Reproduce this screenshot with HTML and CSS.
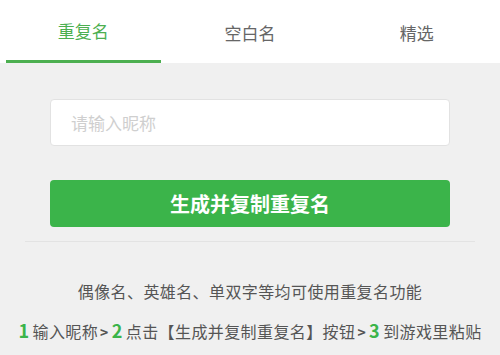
FILE: index.html
```html
<!DOCTYPE html>
<html>
<head>
  <meta charset="utf-8">
  <meta name="viewport" content="width=device-width, initial-scale=1.0">
  <link rel="stylesheet" href="styles.css">
</head>
<body>
  <div class="tabs">
    <div class="tab active">重复名</div>
    <div class="tab">空白名</div>
    <div class="tab">精选</div>
  </div>

  <div class="panel">
    <input class="name-input" type="text" placeholder="请输入昵称">
    <button class="make-button">生成并复制重复名</button>
  </div>

  <div class="divider"></div>

  <div class="tips">
    <p class="tip">偶像名、英雄名、单双字等均可使用重复名功能</p>
    <p class="steps">
      <span class="num">1</span>输入昵称<span class="arrow">&gt;</span><span class="num">2</span>点击【生成并复制重复名】按钮<span class="arrow">&gt;</span><span class="num">3</span>到游戏里粘贴
    </p>
  </div>
</body>
</html>
```

FILE: styles.css
```css
* {
  box-sizing: border-box;
}
body {
  margin: 0;
  background: #f0f0f0;
  font-family: "Noto Sans CJK SC", "Noto Sans", sans-serif;
  color: #555;
}
.tabs {
  display: flex;
  background: #fff;
  height: 63px;
}
.tab {
  flex: 1;
  margin: 0 6px;
  text-align: center;
  font-size: 17px;
  line-height: 65px;
  color: #666;
}
.tab.active {
  color: #4caf50;
  line-height: 62px;
  border-bottom: 3px solid #4caf50;
}
.panel {
  padding: 36px 50px 0;
}
.name-input {
  display: block;
  width: 100%;
  height: 47px;
  padding: 0 20px;
  border: 1px solid #e2e2e2;
  border-radius: 4px;
  background: #fff;
  font-family: inherit;
  font-size: 17px;
  color: #333;
  outline: none;
}
.name-input::placeholder {
  color: #cfcfcf;
}
.make-button {
  display: block;
  width: 100%;
  height: 47px;
  margin-top: 34px;
  border: none;
  border-radius: 4px;
  background: #3bb44a;
  color: #fff;
  font-family: inherit;
  font-size: 20px;
  font-weight: bold;
  cursor: pointer;
}
.divider {
  height: 1px;
  margin: 14px 25px 0;
  background: #e3e3e3;
}
.tips {
  text-align: center;
  font-size: 16px;
  letter-spacing: 0.4px;
}
.tip {
  margin: 37px 0 0;
  line-height: 24px;
}
.steps {
  margin: 15px 0 0;
  line-height: 24px;
  white-space: nowrap;
}
.num {
  color: #3bb44a;
  font-weight: bold;
  font-size: 18px;
  margin-right: 3px;
}
.arrow {
  font-size: 14px;
  font-weight: bold;
  margin: 0 3px 0 2px;
}
```
